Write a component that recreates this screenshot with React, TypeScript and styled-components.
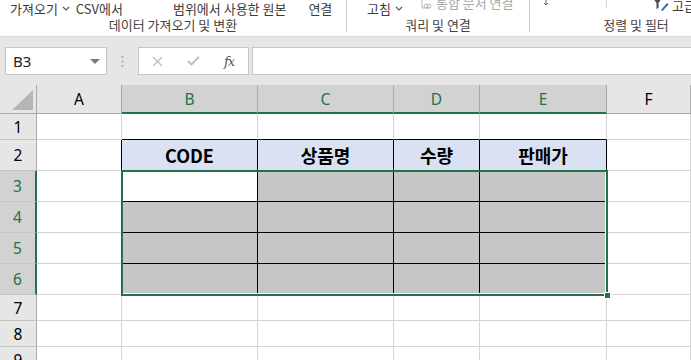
import React from "react";
import styled, { createGlobalStyle } from "styled-components";

const GREEN = "#217346";
const FONT = `"Noto Sans", "Noto Sans CJK KR", sans-serif`;
const KFONT = `"Noto Sans CJK KR", "Noto Sans", sans-serif`;

const Global = createGlobalStyle`
  html, body { margin: 0; padding: 0; background: #ffffff; overflow: hidden; }
  body { font-family: ${FONT}; width: 691px; height: 360px; }
  * { box-sizing: border-box; }
`;

const Page = styled.div`
  width: 691px;
  height: 360px;
  overflow: hidden;
  display: flex;
  flex-direction: column;
  background: #e6e6e6;
`;

/* ---------------- Ribbon ---------------- */
const Ribbon = styled.div`
  height: 37px;
  background: #ffffff;
  display: flex;
  flex: none;
  overflow: hidden;
  border-bottom: 1px solid #dadada;
`;

const Group = styled.div<{ $w: number; $sep?: boolean }>`
  width: ${(p) => p.$w}px;
  flex: none;
  display: flex;
  flex-direction: column;
  border-right: ${(p) => (p.$sep ? "1px solid #cfcfcf" : "none")};
  margin-bottom: 4px;
`;

const Commands = styled.div<{ $pl: number }>`
  height: 19px;
  display: flex;
  align-items: flex-start;
  padding-left: ${(p) => p.$pl}px;
  position: relative;
`;

const Cmd = styled.div<{ $ml?: number; $dim?: boolean; $up?: number }>`
  margin-left: ${(p) => p.$ml ?? 0}px;
  margin-top: ${(p) => -(p.$up ?? 0)}px;
  font-family: ${KFONT};
  font-size: 13px;
  line-height: 17px;
  color: ${(p) => (p.$dim ? "#a8a8a8" : "#3b3b3b")};
  white-space: nowrap;
  display: flex;
  align-items: center;
  gap: 4px;
`;

const GroupLabel = styled.div`
  flex: 1;
  font-family: ${KFONT};
  font-size: 13px;
  line-height: 14px;
  color: #444444;
  text-align: center;
  white-space: nowrap;
`;

const FaintSep = styled.div<{ $ml: number }>`
  margin-left: ${(p) => p.$ml}px;
  width: 1px;
  height: 8px;
  background: #d6d6d6;
`;

const Chevron = () => (
  <svg width="8" height="5" viewBox="0 0 8 5">
    <path d="M1 1 L4 4 L7 1" fill="none" stroke="#555" strokeWidth="1.1" />
  </svg>
);

/* ---------------- Formula bar ---------------- */
const FormulaBar = styled.div`
  height: 48px;
  flex: none;
  display: flex;
  align-items: flex-start;
  padding: 10px 0 0 5px;
  background: #e6e6e6;
`;

const NameBox = styled.div`
  width: 102px;
  height: 28px;
  background: #ffffff;
  border: 1px solid #c6c6c6;
  display: flex;
  align-items: center;
  justify-content: space-between;
  padding: 0 6px 0 7px;
  font-family: ${FONT};
  font-size: 15px;
  color: #222;
`;

const DropTri = styled.span`
  width: 0;
  height: 0;
  border-left: 5px solid transparent;
  border-right: 5px solid transparent;
  border-top: 5px solid #7a7a7a;
`;

const Dots = styled.div`
  width: 31px;
  height: 28px;
  display: flex;
  align-items: center;
  justify-content: center;
`;

const FxBox = styled.div`
  width: 111px;
  height: 28px;
  background: #ffffff;
  border: 1px solid #c6c6c6;
  display: flex;
  align-items: center;
  padding-left: 9px;
`;

const FxBtn = styled.div<{ $w: number }>`
  width: ${(p) => p.$w}px;
  display: flex;
  align-items: center;
  justify-content: center;
`;

const FxText = styled.span`
  font-family: "DejaVu Serif", "Liberation Serif", serif;
  font-style: italic;
  font-size: 13px;
  color: #555;
  letter-spacing: -1px;
`;

const FormulaInput = styled.div`
  flex: 1;
  height: 28px;
  margin-left: 3px;
  background: #ffffff;
  border: 1px solid #c6c6c6;
  border-right: none;
`;

/* ---------------- Sheet ---------------- */
const SheetWrap = styled.div`
  position: relative;
  flex: 1;
  background: #ffffff;
  overflow: hidden;
`;

const Grid = styled.div`
  display: grid;
  grid-template-columns: 37px 85px 136px 136px 86px 127px 1fr;
  grid-template-rows: 29px 26px 31px 31px 31px 31px 31px 26px 26px 26px;
`;

const Corner = styled.div`
  background: #e6e6e6;
  border-right: 1px solid #ababab;
  border-bottom: 1px solid #ababab;
  display: flex;
  align-items: flex-end;
  justify-content: flex-end;
  padding: 0 3px 3px 0;
`;

const ColHead = styled.div<{ $sel: boolean }>`
  background: ${(p) => (p.$sel ? "#d2d2d2" : "#e6e6e6")};
  color: ${(p) => (p.$sel ? GREEN : "#000")};
  border-right: 1px solid #ababab;
  border-bottom: ${(p) => (p.$sel ? `2px solid ${GREEN}` : "1px solid #ababab")};
  font-family: ${FONT};
  font-size: 15.5px;
  display: flex;
  align-items: center;
  justify-content: center;
  padding-top: ${(p) => (p.$sel ? 1 : 0)}px;
`;

const RowHead = styled.div<{ $sel: boolean }>`
  background: ${(p) => (p.$sel ? "#d2d2d2" : "#e6e6e6")};
  color: ${(p) => (p.$sel ? GREEN : "#000")};
  border-right: ${(p) => (p.$sel ? `2px solid ${GREEN}` : "1px solid #ababab")};
  border-bottom: 1px solid #c4c4c4;
  font-family: ${FONT};
  font-size: 15.5px;
  display: flex;
  align-items: center;
  justify-content: center;
`;

type Kind = "plain" | "head" | "data" | "active";

const Cell = styled.div<{ $kind: Kind; $rb?: string; $bb?: string }>`
  background: ${(p) =>
    p.$kind === "head" ? "#d9e1f2" : p.$kind === "data" ? "#c6c6c6" : "#ffffff"};
  border-right: 1px solid ${(p) => p.$rb ?? "#d4d4d4"};
  border-bottom: 1px solid ${(p) => p.$bb ?? "#d4d4d4"};
  font-family: ${KFONT};
  font-weight: 700;
  font-size: 18px;
  color: #000;
  display: flex;
  align-items: center;
  justify-content: center;
`;

const Selection = styled.div`
  position: absolute;
  left: 121px;
  top: 85px;
  width: 487px;
  height: 126px;
  border: 2px solid ${GREEN};
  box-shadow: inset -1px -1px 0 #ffffff;
  pointer-events: none;
`;

const FillHandle = styled.div`
  position: absolute;
  right: -5px;
  bottom: -5px;
  width: 7px;
  height: 7px;
  background: ${GREEN};
  border: 1px solid #ffffff;
`;

const COLS = ["A", "B", "C", "D", "E", "F"];
const HEADERS = ["CODE", "상품명", "수량", "판매가"];

function cellProps(r: number, c: number): { kind: Kind; rb?: string; bb?: string; text?: string } {
  const inTableCol = c >= 1 && c <= 4;
  const inTableRow = r >= 2 && r <= 6;
  if (inTableCol && inTableRow) {
    if (r === 2) return { kind: "head", rb: "#000", bb: "#000", text: HEADERS[c - 1] };
    if (r === 3 && c === 1) return { kind: "active", rb: "#000", bb: "#000" };
    return { kind: "data", rb: "#000", bb: "#000" };
  }
  if (inTableCol && r === 1) return { kind: "plain", bb: "#000" };
  if (c === 0 && inTableRow) return { kind: "plain", rb: "#000" };
  return { kind: "plain" };
}

export default function App() {
  const rows = [1, 2, 3, 4, 5, 6, 7, 8, 9];
  return (
    <Page>
      <Global />
      <Ribbon>
        <Group $w={347} $sep>
          <Commands $pl={10}>
            <Cmd>
              가져오기 <Chevron />
            </Cmd>
            <Cmd $ml={6}>CSV에서</Cmd>
            <Cmd $ml={50}>범위에서 사용한 원본</Cmd>
            <Cmd $ml={22}>연결</Cmd>
          </Commands>
          <GroupLabel>데이터 가져오기 및 변환</GroupLabel>
        </Group>
        <Group $w={183} $sep>
          <Commands $pl={20}>
            <Cmd>
              고침 <Chevron />
            </Cmd>
            <Cmd $ml={17} $dim $up={6}>
              <svg width="12" height="14" viewBox="0 0 12 14">
                <path d="M2 1 V12 H10" fill="none" stroke="#b8b8b8" strokeWidth="1" />
                <circle cx="6" cy="10" r="2" fill="none" stroke="#b8b8b8" strokeWidth="1" />
                <circle cx="9" cy="10" r="2" fill="none" stroke="#b8b8b8" strokeWidth="1" />
              </svg>
              통합 문서 연결
            </Cmd>
          </Commands>
          <GroupLabel>쿼리 및 연결</GroupLabel>
        </Group>
        <Group $w={212}>
          <Commands $pl={13}>
            <svg width="6" height="6" viewBox="0 0 6 6">
              <path d="M3 0 V4 M1 3 L3 5 L5 3" fill="none" stroke="#4a6fa5" strokeWidth="1" />
            </svg>
            <FaintSep $ml={57} />
            <svg style={{ marginLeft: 46, marginTop: -2 }} width="16" height="13" viewBox="0 0 16 13">
              <path d="M0 0 H9 L5.5 5 V10 L3.5 11 V5 Z" fill="#4a4a4a" />
              <path d="M8 12 L14 5 L15.5 6.5 L9.5 13 Z" fill="#2b6cb0" />
            </svg>
            <Cmd $ml={3} $up={3}>고급</Cmd>
          </Commands>
          <GroupLabel>정렬 및 필터</GroupLabel>
        </Group>
      </Ribbon>

      <FormulaBar>
        <NameBox>
          B3
          <DropTri />
        </NameBox>
        <Dots>
          <svg width="3" height="11" viewBox="0 0 3 11">
            <rect x="0.5" y="0" width="2" height="2" fill="#b0b0b0" />
            <rect x="0.5" y="4.5" width="2" height="2" fill="#b0b0b0" />
            <rect x="0.5" y="9" width="2" height="2" fill="#b0b0b0" />
          </svg>
        </Dots>
        <FxBox>
          <FxBtn $w={18}>
            <svg width="11" height="11" viewBox="0 0 11 11">
              <path d="M1 1 L10 10 M10 1 L1 10" stroke="#bdbdbd" strokeWidth="1.4" />
            </svg>
          </FxBtn>
          <FxBtn $w={55}>
            <svg width="13" height="10" viewBox="0 0 13 10">
              <path d="M1 5 L4.5 8.5 L12 1" fill="none" stroke="#bdbdbd" strokeWidth="1.8" />
            </svg>
          </FxBtn>
          <FxBtn $w={16}>
            <FxText>fx</FxText>
          </FxBtn>
        </FxBox>
        <FormulaInput />
      </FormulaBar>

      <SheetWrap>
        <Grid>
          <Corner>
            <svg width="21" height="20" viewBox="0 0 21 20">
              <path d="M21 0 V20 H0 Z" fill="#b6b6b6" />
            </svg>
          </Corner>
          {COLS.map((c, i) => (
            <ColHead key={c} $sel={i >= 1 && i <= 4}>
              {c}
            </ColHead>
          ))}
          {rows.map((r) => (
            <React.Fragment key={r}>
              <RowHead $sel={r >= 3 && r <= 6}>{r}</RowHead>
              {COLS.map((_, c) => {
                const p = cellProps(r, c);
                return (
                  <Cell key={c} $kind={p.kind} $rb={p.rb} $bb={p.bb}>
                    {p.text}
                  </Cell>
                );
              })}
            </React.Fragment>
          ))}
        </Grid>
        <Selection>
          <FillHandle />
        </Selection>
      </SheetWrap>
    </Page>
  );
}
